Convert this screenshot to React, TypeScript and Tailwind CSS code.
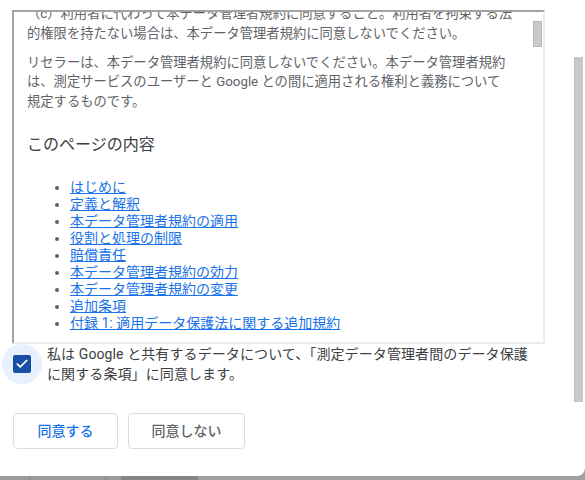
import { Check } from "lucide-react";

const sections = [
  "はじめに",
  "定義と解釈",
  "本データ管理者規約の適用",
  "役割と処理の制限",
  "賠償責任",
  "本データ管理者規約の効力",
  "本データ管理者規約の変更",
  "追加条項",
  "付録 1: 適用データ保護法に関する追加規約",
];

function TermsBox() {
  return (
    <div className="ml-[12px] flex h-[334px] w-[533px] border-t-2 border-l-2 border-r-2 border-b-2 border-t-[#a3a3a3] border-l-[#a3a3a3] border-r-[#ececec] border-b-[#ececec]">
      <div className="flex-1 overflow-hidden pl-[13px]">
        <div className="-mt-[8px] text-[13.3px] leading-[19.5px] text-[#5f6368]">
          <p className="mb-[9.5px]">
            （c）利用者に代わって本データ管理者規約に同意すること。利用者を拘束する法
            <br />
            的権限を持たない場合は、本データ管理者規約に同意しないでください。
          </p>
          <p>
            リセラーは、本データ管理者規約に同意しないでください。本データ管理者規約
            <br />
            は、測定サービスのユーザーと Google との間に適用される権利と義務について
            <br />
            規定するものです。
          </p>
          <h2 className="mt-[22px] text-[16px] font-normal leading-[24px] text-[#3c4043]">このページの内容</h2>
          <ul className="mt-[22px] list-disc pl-[43px] text-[14px] leading-[17px] marker:text-[#5f6368]">
            {sections.map((s) => (
              <li key={s}>
                <a href="#" className="text-[#1a73e8] underline">
                  {s}
                </a>
              </li>
            ))}
          </ul>
        </div>
      </div>
      <div className="w-[10px]">
        <div className="mt-[9px] h-[26px] w-[9px] border border-[#b8b8b8] bg-[#cacaca]" />
      </div>
    </div>
  );
}

export default function App() {
  return (
    <div className="flex h-[480px] w-[585px] flex-col overflow-hidden bg-[#a0a0a0] font-['Roboto','Noto_Sans_CJK_JP',sans-serif]">
      <div className="flex h-[476px] rounded-br-[8px] bg-white">
        <div className="flex flex-1 flex-col pt-[10px]">
          <TermsBox />

          {/* consent checkbox */}
          <div className="flex items-start">
            <div className="ml-[2px] flex h-10 w-10 shrink-0 items-center justify-center rounded-full bg-[#e8f0fe]">
              <div className="flex h-[18px] w-[18px] items-center justify-center rounded-[2px] bg-[#174ea6]">
                <Check className="size-[14px] text-white" strokeWidth={3} />
              </div>
            </div>
            <p className="ml-[5px] text-[14px] leading-[20px] tracking-[0.1px] text-[#3c4043]">
              私は Google と共有するデータについて、「測定データ管理者間のデータ保護
              <br />
              に関する条項」に同意します。
            </p>
          </div>

          <div className="ml-[13px] mt-[29px] flex gap-[10px]">
            <button className="h-[36px] w-[105px] rounded-[4px] border border-[#dadce0] bg-white text-[14px] font-medium text-[#1a73e8]">
              同意する
            </button>
            <button className="h-[36px] w-[117px] rounded-[4px] border border-[#dadce0] bg-white text-[14px] font-medium text-[#5f6368]">
              同意しない
            </button>
          </div>
        </div>

        {/* page scrollbar */}
        <div className="mr-[2px] w-[9px]">
          <div className="mt-[57px] h-[345px] w-[9px] border-l border-[#bdbdbd] bg-[#c8c8c8]" />
        </div>
      </div>

      {/* backdrop strip */}
      <div className="flex h-[4px]">
        <div className="w-[29px] bg-[#9b9b9b]" />
        <div className="w-[1px] bg-[#888888]" />
        <div className="w-[75px] bg-[#9b9b9b]" />
        <div className="w-[1px] bg-[#888888]" />
        <div className="w-[15px] bg-[#9b9b9b]" />
        <div className="w-[77px] bg-[#858585]" />
        <div className="flex-1 bg-[#a0a0a0]" />
      </div>
    </div>
  );
}
